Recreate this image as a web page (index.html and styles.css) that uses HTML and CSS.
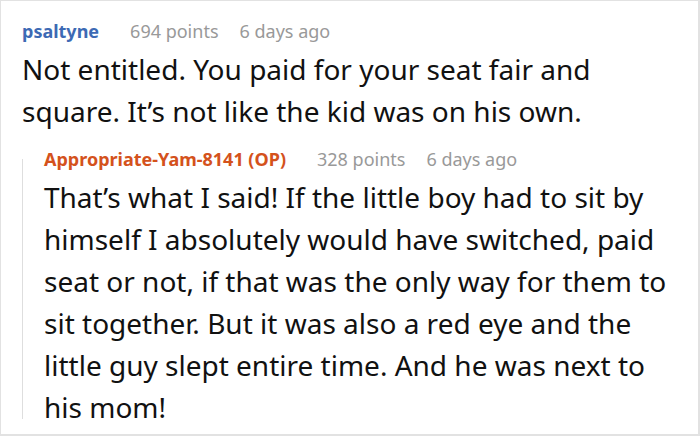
FILE: index.html
```html
<!DOCTYPE html>
<html>
<head>
<meta charset="utf-8">
<link rel="stylesheet" href="styles.css">
</head>
<body>
<div class="frame">
  <div class="comment">
    <div class="meta">
      <span class="author author-blue">psaltyne</span>
      <span class="info">694 points</span>
      <span class="info">6 days ago</span>
    </div>
    <p class="text">Not entitled. You paid for your seat fair and square. It’s not like the kid was on his own.</p>
    <div class="reply">
      <div class="meta">
        <span class="author author-orange">Appropriate-Yam-8141 (OP)</span>
        <span class="info">328 points</span>
        <span class="info">6 days ago</span>
      </div>
      <p class="text">That’s what I said! If the little boy had to sit by himself I absolutely would have switched, paid seat or not, if that was the only way for them to sit together. But it was also a red eye and the little guy slept entire time. And he was next to his mom!</p>
    </div>
  </div>
</div>
</body>
</html>
```
FILE: styles.css
```css
html, body {
  margin: 0;
  padding: 0;
  background: #ffffff;
}
.frame {
  width: 700px;
  height: 436px;
  box-sizing: border-box;
  border: 1px solid #e2e2e2;
  border-right-width: 2px;
  border-bottom-width: 2px;
  overflow: hidden;
  font-family: "Noto Sans", "Open Sans", sans-serif;
  color: #111111;
}
.comment {
  padding: 18px 24px 0 21px;
}
.meta {
  display: flex;
  font-size: 18px;
  line-height: 24px;
}
.author {
  font-weight: 700;
  margin-right: 31px;
}
.info + .info {
  margin-left: 21px;
}
.author-blue {
  color: #3d6ab4;
}
.author-orange {
  color: #d4521c;
}
.info {
  color: #999999;
}
.text {
  margin: 5px 0 0 0;
  font-size: 28px;
  line-height: 42px;
}
.reply {
  position: relative;
  margin-top: 12px;
  padding-left: 22px;
  padding-top: 3px;
}
.reply::before {
  content: "";
  position: absolute;
  left: 0;
  top: 15px;
  bottom: 9px;
  width: 1px;
  background: #dedede;
}
```
